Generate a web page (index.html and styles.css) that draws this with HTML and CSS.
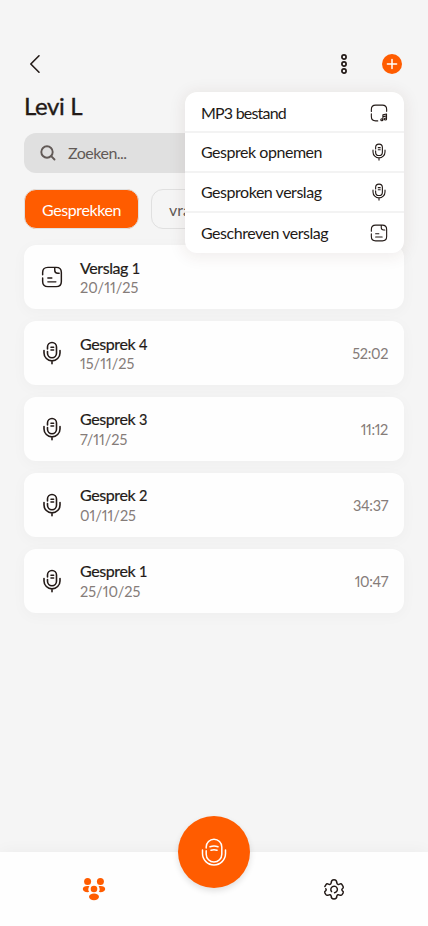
FILE: index.html
```html
<!DOCTYPE html>
<html lang="nl">
<head>
<meta charset="utf-8">
<meta name="viewport" content="width=device-width, initial-scale=1">
<title>Levi L</title>
<link rel="stylesheet" href="styles.css">
</head>
<body>
<svg class="defs" width="0" height="0" aria-hidden="true">
  <symbol id="mic" viewBox="0 0 24 24"><path d="M7.5 8V6a4.5 4.5 0 0 1 9 0v6.2a4.5 4.5 0 0 1-9 0V10.5M11 6.2h2.6M11 9h2.6M4 9.5v2.4a8 8 0 0 0 16 0V9.5M12 20.2v2.6"/></symbol>
  <symbol id="note" viewBox="0 0 24 24"><path d="M1.8 9.5V7.2q0-5.7 5.7-5.7h9q5.7 0 5.7 5.7v9.6q0 5.7-5.7 5.7h-9q-5.7 0-5.7-5.7V13M15 2v2.7q0 3.3 3.3 3.3h1.5M7.5 13h4.3M7.5 17.3h8.7"/></symbol>
  <symbol id="music" viewBox="0 0 24 24"><path d="M1.8 10V7.2q0-5.7 5.7-5.7h9q5.7 0 5.7 5.7v2.6M1.8 13v3.8q0 5.7 5.7 5.7h2.8M17.2 21v-6.5l4.8-1.2V20M17.2 17l4.8-1.2"/><circle cx="15.8" cy="21" r="1.4"/><circle cx="20.6" cy="20" r="1.4"/></symbol>
</svg>
<div class="screen">
  <header class="topbar">
    <svg class="back" viewBox="0 0 12 20"><path d="M10 1.8 1.8 10l8.2 8.2"/></svg>
    <div class="actions">
      <svg class="more" viewBox="0 0 8 20"><circle cx="4" cy="3" r="2.1"/><circle cx="4" cy="10" r="2.1"/><circle cx="4" cy="17" r="2.1"/></svg>
      <svg class="add" viewBox="0 0 20 20"><circle cx="10" cy="10" r="10"/><path d="M10 5.4v9.2M5.4 10h9.2"/></svg>
      <div class="menu">
        <div class="option"><span class="w1">MP3 bestand</span><svg class="icon20"><use href="#music"/></svg></div>
        <div class="option"><span class="w2">Gesprek opnemen</span><svg class="icon18"><use href="#mic"/></svg></div>
        <div class="option"><span class="w2">Gesproken verslag</span><svg class="icon18"><use href="#mic"/></svg></div>
        <div class="option"><span class="w2">Geschreven verslag</span><svg class="icon20"><use href="#note"/></svg></div>
      </div>
    </div>
  </header>
  <h1>Levi L</h1>
  <div class="search"><svg viewBox="0 0 16 16"><circle cx="7" cy="7" r="5.7"/><path d="m11.2 11.2 3.3 3.3"/></svg><span>Zoeken...</span></div>
  <div class="tabs"><div class="tab active">Gesprekken</div><div class="tab vragen">vragen</div></div>
  <main class="list">
    <article class="card"><svg class="lead note"><use href="#note"/></svg><div class="info"><b>Verslag <i>1</i></b><span>20/11/25</span></div></article>
    <article class="card"><svg class="lead"><use href="#mic"/></svg><div class="info"><b>Gesprek <i>4</i></b><span>15/11/25</span></div><time>52:02</time></article>
    <article class="card spaced"><svg class="lead"><use href="#mic"/></svg><div class="info"><b>Gesprek <i>3</i></b><span>7/11/25</span></div><time>11:12</time></article>
    <article class="card spaced"><svg class="lead"><use href="#mic"/></svg><div class="info"><b>Gesprek <i>2</i></b><span>01/11/25</span></div><time>34:37</time></article>
    <article class="card spaced"><svg class="lead"><use href="#mic"/></svg><div class="info"><b>Gesprek <i>1</i></b><span>25/10/25</span></div><time>10:47</time></article>
  </main>
  <nav class="bottom">
    <svg class="people" viewBox="0 0 24 24"><circle cx="5.6" cy="4.5" r="3.5"/><circle cx="18.4" cy="4.5" r="3.5"/><circle cx="12" cy="12" r="3.3"/><ellipse cx="12" cy="19.8" rx="5" ry="3.4"/><path d="M7.4 9.2C3.5 8.5.8 10 .8 12s2.7 3.6 6.4 3c-1.3-1.8-1.2-4 .2-5.8M16.6 9.2c3.9-.7 6.6.8 6.6 2.8s-2.7 3.6-6.4 3c1.3-1.8 1.2-4-.2-5.8"/></svg>
    <div class="fab"><svg viewBox="0 0 28 28"><path d="M6.2 10V9a7.8 7.8 0 0 1 15.6 0v7.2a7.8 7.8 0 0 1-15.6 0v-3.5M10 8.7q4-1.3 8 0M11 12.3q3-1 6 0M2.5 12v3.5a11.5 11.5 0 0 0 23 0V12"/></svg></div>
    <svg class="gear" viewBox="0 0 24 24"><path d="M2 9.3 3.1 7.4q1-1.6 2.8-.7Q8 7.8 8.9 5.4 9 2 12 2t3.1 3.4Q16 7.8 18.1 6.7q1.8-.9 2.8.7L22 9.3q.7 1.6-1 2.5-1 1 0 2 1.7 1.1 1 2.5l-1 1.6q-1.1 1.6-2.9.7-2.1-1.1-3 1.1 0 3.3-3.1 3.3t-3.1-3.3q-.9-2.2-3-1.1-1.8.9-2.9-.7l-1-1.6q-.7-1.4 1-2.5 1-1 0-2"/><path d="M9.3 14.8a3.6 3.6 0 1 1 3.3 1.3"/></svg>
  </nav>
</div>
</body>
</html>
```
FILE: styles.css
```css
* { box-sizing: border-box; }
body { margin: 0; background: #f5f5f5; color: #231a17; font: 16px/20px Lato, "Noto Sans", sans-serif; }
svg { display: block; flex: none; fill: none; stroke: currentColor; stroke-linecap: round; stroke-linejoin: round; stroke-width: 1.5; }
.defs { position: absolute; }
.screen { width: 428px; height: 926px; display: flex; flex-direction: column; overflow: hidden; }
.topbar { height: 40px; margin: 44px 26px 0 29px; display: flex; align-items: center; justify-content: space-between; }
.back { width: 12px; height: 20px; stroke-width: 1.6; }
.actions { position: relative; display: flex; align-items: center; gap: 34px; }
.more { width: 8px; height: 20px; stroke-width: 1.7; }
.add { width: 20px; height: 20px; stroke: #fff; }
.add circle { fill: #ff5c00; stroke: none; }
.menu { position: absolute; z-index: 2; top: 38px; right: -2px; width: 219px; height: 161px; border-radius: 12px; background: #fff; box-shadow: 0 2px 16px 2px rgba(80, 40, 20, .08); }
.option { height: 40px; padding: 0 15px 0 16px; display: flex; align-items: center; justify-content: space-between; border-bottom: 2px solid #f3f3f3; }
.option:first-child { height: 41px; padding-top: 2px; }
.option:last-child { border: 0; }
.option span { white-space: nowrap; }
.icon20 { width: 20px; height: 20px; padding: 1px; }
.icon18 { width: 18px; height: 18px; margin-right: 1px; }
.w1 { letter-spacing: -.8px; }
.w2 { letter-spacing: -.47px; }
h1 { margin: 7px 24px 0; height: 30px; font-size: 24px; line-height: 30px; font-weight: 400; letter-spacing: -.4px; -webkit-text-stroke: .35px; }
.search { margin: 12px 24px 0; height: 40px; border-radius: 12px; padding: 0 16px; display: flex; align-items: center; gap: 12px; background: #e0e0e0; color: #625a57; }
.search svg { width: 16px; height: 16px; stroke-width: 1.9; }
.search span { letter-spacing: -.5px; }
.tabs { display: flex; gap: 12px; margin: 16px 24px 0; height: 40px; }
.tab { height: 40px; border: 1px solid #e0e0e0; border-radius: 12px; padding: 0 17px; line-height: 39px; color: #625a57; }
.active { width: 115px; padding: 0; text-align: center; background: #ff5c00; color: #fff; letter-spacing: -.4px; }
.list { display: flex; flex-direction: column; gap: 12px; margin: 16px 24px 0; }
.card { height: 64px; padding: 0 16px; display: flex; align-items: center; background: #fefefe; border-radius: 12px; box-shadow: 0 3px 14px 2px rgba(0, 0, 0, .025); }
.lead { width: 24px; height: 24px; stroke-width: 1.6; }
.note { padding: 1px; }
.info { display: flex; flex-direction: column; margin-left: 16px; padding-top: 1px; }
.info b { font-weight: 400; -webkit-text-stroke: .2px; letter-spacing: -.4px; }
.info i { font-style: normal; font-size: 14.5px; }
.info span, time { font-size: 14.5px; font-variant-numeric: proportional-nums; color: #857c79; }
.info b, .info span { height: 20px; line-height: 20px; }
time { margin-left: auto; padding-top: 1px; letter-spacing: -.35px; }
.spaced .info { gap: 1px; padding: 0; }
.bottom { position: relative; margin-top: auto; height: 74px; background: #fefefe; display: flex; align-items: center; justify-content: space-between; padding: 0 82px; box-shadow: 0 0 16px rgba(0, 0, 0, .045); }
.people { width: 24px; height: 24px; fill: #ff5c00; stroke: none; }
.gear { width: 24px; height: 24px; padding: 1px; stroke-width: 1.6; }
.fab { position: absolute; left: 178px; top: -36px; width: 72px; height: 72px; border-radius: 50%; background: #ff5c00; color: #fff; display: flex; align-items: center; justify-content: center; box-shadow: 0 3px 6px rgba(0, 0, 0, .12); }
.fab svg { width: 28px; height: 28px; stroke-width: 1.5; }
```
